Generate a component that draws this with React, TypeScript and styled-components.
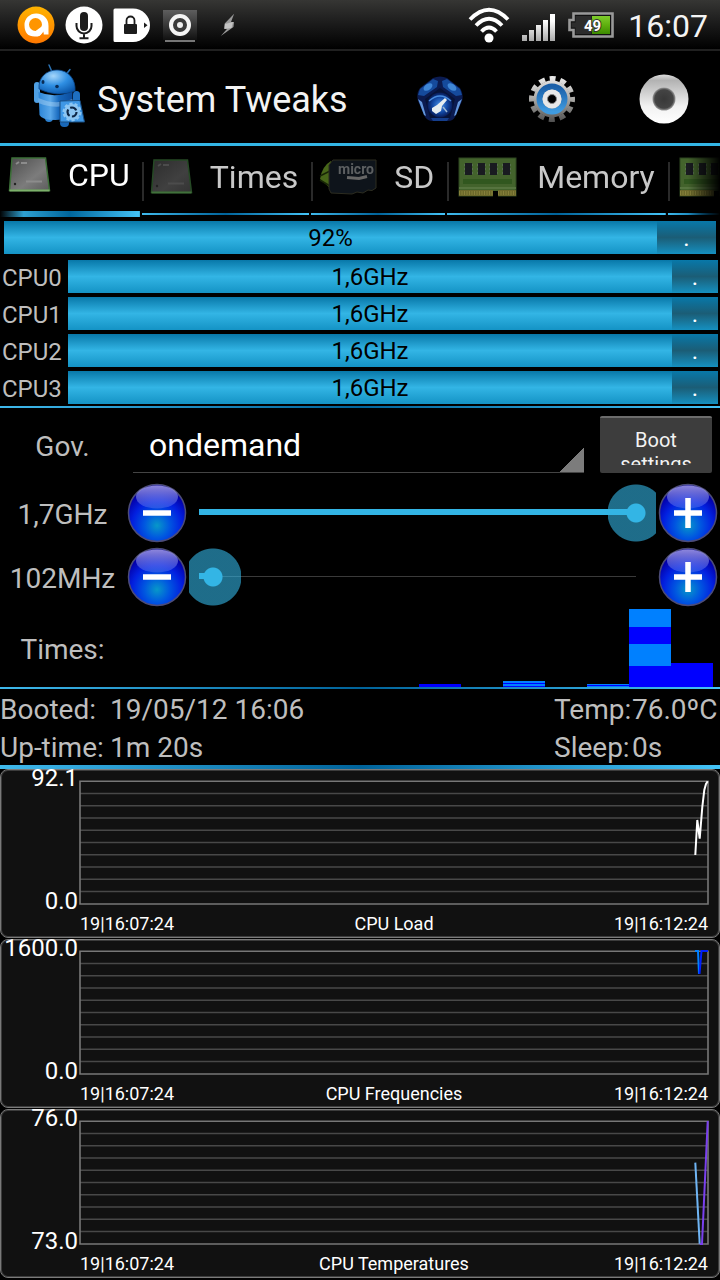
import React, { useState } from "react";
import styled, { createGlobalStyle } from "styled-components";

const GlobalStyle = createGlobalStyle`
  * { box-sizing: border-box; }
  html, body { margin: 0; background: #000; }
  body { font-family: Roboto, "Liberation Sans", sans-serif; color: #bebebe; font-size: 28px; }
  button, select, input { font-family: inherit; margin: 0; }
`;

const Screen = styled.div`
  display: flex;
  flex-direction: column;
  min-height: 100vh;
  background: #000;
  overflow: hidden;
`;

/* ---------- status bar ---------- */

const StatusBar = styled.header`
  display: flex;
  align-items: center;
  justify-content: space-between;
  height: 51px;
  padding: 0 12px 0 17px;
  border-bottom: 2px solid #202020;
  background: linear-gradient(#363634, #1a1a1a 50%, #000);
`;

const StatusGroup = styled.div<{ $gap: number }>`
  display: flex;
  align-items: center;
  gap: ${(p) => p.$gap}px;
`;

const Clock = styled.time`
  margin-left: 2px;
  padding-top: 3px;
  font-size: 32px;
  line-height: 46px;
  color: #f4f4f4;
`;

/* ---------- title bar ---------- */

const TitleBar = styled.div`
  display: flex;
  align-items: center;
  height: 95px;
  padding-left: 32px;
  border-bottom: 3px solid #33b5e5;
`;

const Title = styled.h1`
  flex: 1;
  margin: 0 0 0 11px;
  padding-top: 6px;
  font-size: 36px;
  line-height: 48px;
  font-weight: 400;
  color: #f3f3f3;
`;

const ActionButton = styled.button`
  display: flex;
  align-items: center;
  justify-content: center;
  width: 112px;
  height: 92px;
  padding: 3px 0 0;
  border: 0;
  background: none;
`;

/* ---------- tabs ---------- */

const stripe = "linear-gradient(90deg, #3fb9ec, #00639a 50%, #44c4f8)";

const Tabs = styled.nav`
  display: flex;
  align-items: flex-start;
  gap: 2px;
  height: 71px;
  overflow: hidden;
  mask-image: linear-gradient(90deg, #000 calc(100% - 32px), transparent);
`;

const Tab = styled.button<{ $active?: boolean; $wide?: boolean }>`
  display: flex;
  align-items: center;
  flex: none;
  gap: ${(p) => (p.$wide ? 19 : 17)}px;
  height: ${(p) => (p.$active ? 71 : 69)}px;
  padding: ${(p) => (p.$active ? "0 10px 14px" : "0 11px 8px")};
  padding-left: ${(p) => (p.$wide ? 11 : 8)}px;
  border: 0;
  background: ${(p) =>
    p.$active
      ? "linear-gradient(90deg, #000, #2e9fd0 17%, #00659b 50%, #44c4f8) bottom / 100% 6px no-repeat"
      : `${stripe} bottom / 100% 2px no-repeat, linear-gradient(#2a2a2a, #2a2a2a) 0 16px / 2px 39px no-repeat`};
  font-size: 32px;
  line-height: 40px;
  color: ${(p) => (p.$active ? "#fff" : "#c8c8c8")};
  white-space: nowrap;
`;

/* ---------- load bars ---------- */

const Loads = styled.section`
  display: flex;
  flex-direction: column;
  gap: 4px;
  padding: 4px 2px 2px 2px;
`;

const TotalRow = styled.div`
  display: flex;
  padding: 0 2px 2px;
`;

const CoreRow = styled.div`
  display: grid;
  grid-template-columns: 66px 1fr;
`;

const CoreName = styled.span`
  padding-top: 4px;
  font-size: 24px;
  line-height: 29px;
`;

const Bar = styled.div<{ $rest: number }>`
  display: grid;
  grid-template-columns: 1fr ${(p) => p.$rest}px;
  grid-template-rows: 33px;
  flex: 1;
  font-size: 24px;
  line-height: 31px;
  text-align: center;
`;

const BarFill = styled.span`
  padding-top: 2px;
  height: 33px;
  background: linear-gradient(#0878a9, #33b5e5 50%, #1493c5);
  color: #000;
`;

const BarRest = styled(BarFill)`
  background: linear-gradient(#0878a9, #1b5d76 50%, #1590c0);
  color: #fff;
`;

const Rule = styled.div<{ $height: number }>`
  height: ${(p) => p.$height}px;
  background: ${stripe};
`;

/* ---------- governor and limits ---------- */

const GovernorRow = styled.div`
  display: grid;
  grid-template-columns: 125px 1fr 112px;
  padding: 8px 8px 8px 0;
  height: 73px;
`;

const RowLabel = styled.label`
  align-self: center;
  text-align: center;
  line-height: 36px;
  padding-top: 4px;
`;

const Spinner = styled.select`
  appearance: none;
  margin: 0 16px 0 8px;
  height: 57px;
  padding: 2px 32px 0 16px;
  border: 0;
  border-bottom: 1px solid #444;
  border-radius: 0;
  background: linear-gradient(135deg, transparent 50%, #7c7c7c 50%) right bottom / 24px 24px no-repeat #000;
  color: #fff;
  font-size: 32px;
`;

const BootButton = styled.button`
  height: 57px;
  padding: 10px 8px 8px;
  border: 0;
  border-top: 2px solid #6c6c6c;
  border-radius: 2px;
  background: #3d3d3d;
  color: #f3f3f3;
  font-size: 20px;
  line-height: 24px;
`;

const BootText = styled.span`
  display: block;
  height: 37px;
  overflow: hidden;
`;

const LimitRow = styled.div`
  display: grid;
  grid-template-columns: 125px 64px 1fr 64px;
  align-items: center;
  height: 64px;
`;

const RoundButton = styled.button`
  display: flex;
  align-items: center;
  justify-content: center;
  height: 64px;
  padding: 0;
  border: 0;
  background: none;
`;

const SliderClip = styled.div`
  height: 64px;
  overflow: hidden;
`;

const Slider = styled.input`
  appearance: none;
  display: block;
  width: calc(100% + 26px);
  height: 64px;
  margin-left: -18px;
  background:
    linear-gradient(#33b5e5, #33b5e5) 28px 28px / calc((100% - 56px) * var(--level)) 6px no-repeat,
    linear-gradient(#3a3a3a, #3a3a3a) 28px 31px / calc(100% - 56px) 1px no-repeat;
  &::-webkit-slider-runnable-track { height: 64px; }
  &::-webkit-slider-thumb {
    appearance: none;
    width: 56px;
    height: 64px;
    border: 0;
    background: radial-gradient(circle at 50% 50%, #33b5e5 9px, rgba(51, 181, 229, 0.6) 10px, rgba(51, 181, 229, 0.6) 28px, transparent 29px);
  }
`;

const TimesRow = styled.div`
  display: grid;
  grid-template-columns: 125px 1fr;
  height: 78px;
  padding-right: 7px;
`;

const Histogram = styled.div`
  display: grid;
  grid-template-columns: repeat(14, 1fr);
  align-items: end;
`;

const Stack = styled.div`
  display: flex;
  flex-direction: column;
`;

const Segment = styled.span<{ $size: number; $light: boolean }>`
  height: ${(p) => p.$size}px;
  background: ${(p) => (p.$light ? "#0080ff" : "#0000ff")};
`;

/* ---------- info ---------- */

const Info = styled.dl`
  display: grid;
  grid-template-columns: 110px 1fr 78px 88px;
  margin: 0;
  line-height: 38px;
  padding-top: 2px;
  height: 76px;
  white-space: nowrap;
`;

const Cell = styled.div`
  display: contents;
  dt, dd { margin: 0; }
`;

/* ---------- charts ---------- */

const Charts = styled.section`
  display: flex;
  flex-direction: column;
  gap: 1px;
`;

const ChartCard = styled.figure`
  display: grid;
  grid-template-columns: 78px 1fr;
  grid-template-rows: 140px 27px;
  margin: 0;
  padding-right: 10px;
  border: 1px solid #7a7a7a;
  border-radius: 8px;
  background: #111;
  box-shadow: inset 0 0 0 1px #3c3c3c;
  color: #fff;
`;

const Axis = styled.div`
  display: flex;
  flex-direction: column;
  justify-content: space-between;
  align-items: flex-end;
  padding: 0 1px 1px 0;
  font-size: 24px;
  line-height: 16px;
`;

const Plot = styled.svg`
  display: block;
  width: 100%;
  height: 125px;
  margin-top: 10px;
`;

const ChartFooter = styled.figcaption`
  grid-column: 2;
  display: flex;
  justify-content: space-between;
  padding: 0 1px;
  font-size: 18px;
  line-height: 27px;
`;

/* ---------- icons ---------- */

const AvastIcon = () => (
  <svg width="38" height="38" viewBox="0 0 38 38" aria-hidden="true">
    <defs>
      <linearGradient id="orange" x1="0" y1="0" x2="0" y2="1">
        <stop offset="0" stopColor="#ffb400" />
        <stop offset="1" stopColor="#ff7800" />
      </linearGradient>
    </defs>
    <circle cx="19" cy="19" r="18.5" fill="url(#orange)" />
    <path d="M19 7.5A12 12 0 0 1 31.5 20v8.500h-5V27l-4 3q-15 3-15-11A11.500 11.500 0 0 1 19 7.500z" fill="#fff" />
    <circle cx="18.500" cy="18.500" r="6.500" fill="#ff9500" />
    <path d="M18 25.500l8-6v6l-6 5z" fill="#fff" />
    <path d="M22 31.500l4.500-6v6z" fill="#ff8300" />
  </svg>
);

const MicIcon = () => (
  <svg width="38" height="38" viewBox="0 0 38 38" aria-hidden="true">
    <circle cx="19" cy="19" r="18.5" fill="#fff" />
    <rect x="15" y="6" width="8" height="19" rx="4" fill="#1c1c1c" />
    <path d="M11.5 17v3a7.5 7.5 0 0 0 15 0v-3M19 28v4M14.5 32.2h9" fill="none" stroke="#1c1c1c" strokeWidth="2" />
  </svg>
);

const LockTagIcon = () => (
  <svg width="38" height="38" viewBox="0 0 38 38" aria-hidden="true">
    <path d="M2 2.5h18a17 16.7 0 0 1 0 33.4H2a1.5 1.5 0 0 1-1.5-1.5V4A1.5 1.5 0 0 1 2 2.5z" fill="#fff" />
    <rect x="11" y="18" width="13" height="10" rx="1" fill="#1c1c1c" />
    <path d="M13.5 18v-3.5a4 4 0 0 1 8 0V18" fill="none" stroke="#1c1c1c" strokeWidth="1.8" />
    <path d="M31 16.5l3.500 2.700-3.500 2.700z" fill="#1c1c1c" />
  </svg>
);

const SpeakerIcon = () => (
  <svg width="38" height="38" viewBox="0 0 38 38" aria-hidden="true">
    <defs>
      <linearGradient id="speaker" x1="0" y1="0" x2="0" y2="1">
        <stop offset="0" stopColor="#5e5e5e" />
        <stop offset="1" stopColor="#111" />
      </linearGradient>
    </defs>
    <rect x="2" y="4" width="34" height="30" fill="url(#speaker)" />
    <rect x="4" y="34" width="30" height="2" fill="#777" />
    <circle cx="19" cy="19" r="9" fill="#3a3a3a" stroke="#f4f4f4" strokeWidth="4" />
    <circle cx="19" cy="19" r="3" fill="#eee" />
  </svg>
);

const BoltIcon = () => (
  <svg width="38" height="38" viewBox="0 0 38 38" aria-hidden="true">
    <path d="M27 9L16 17l-1.500 5 3 .500L10 28.500l0 0L24 22l1.500-5-3-.500z" fill="#999" transform="rotate(-10 19 19)" />
    <path d="M16 18l8-2-1.500 6-7 1z" fill="#c4c4c4" />
  </svg>
);

const WifiIcon = () => (
  <svg width="42" height="36" viewBox="0 0 42 36" aria-hidden="true">
    <g fill="none" stroke="#fff" strokeWidth="3.8">
      <path d="M2 12.500Q21-7 40 12.500" />
      <path d="M8 18.500Q21 5 34 18.500" />
      <path d="M13.5 24.500Q21 16.500 28.5 24.500" />
    </g>
    <circle cx="21" cy="31" r="4.5" fill="#fff" />
  </svg>
);

const SignalIcon = () => (
  <svg width="34" height="32" viewBox="0 0 34 32" aria-hidden="true">
    <defs>
      <linearGradient id="signal" gradientUnits="userSpaceOnUse" x1="0" y1="12" x2="0" y2="32">
        <stop offset="0" stopColor="#fff" />
        <stop offset="1" stopColor="#aaa" />
      </linearGradient>
    </defs>
    {[6, 11, 16, 21, 27].map((h, i) => (
      <rect key={h} x={i * 7} y={32 - h} width="5" height={h} fill="url(#signal)" />
    ))}
  </svg>
);

const BatteryIcon = () => (
  <svg width="46" height="26" viewBox="0 0 46 26" aria-hidden="true">
    <defs>
      <linearGradient id="charge" x1="0" y1="0" x2="0" y2="1">
        <stop offset="0" stopColor="#7ecb2c" />
        <stop offset=".5" stopColor="#5fb00e" />
        <stop offset="1" stopColor="#3c8a00" />
      </linearGradient>
    </defs>
    <path d="M5.5 1.5h39v23h-39V18h-4V8h4z" fill="#111" stroke="#999" strokeWidth="2.6" />
    <path d="M3.5 10.5h4V4h16v18H7.5v-6.5h-4z" fill="#2c2c2c" />
    <rect x="24" y="4" width="18" height="18" fill="url(#charge)" />
    <text x="24.5" y="18.500" textAnchor="middle" fontSize="15" fontWeight="700" fill="#fff" stroke="#333" strokeWidth="2" paintOrder="stroke">49</text>
  </svg>
);

const RobotIcon = () => (
  <svg width="54" height="66" viewBox="0 0 54 66" aria-hidden="true">
    <defs>
      <linearGradient id="robot" x1="0" y1="0" x2="1" y2="0">
        <stop offset="0" stopColor="#2b84d6" />
        <stop offset=".35" stopColor="#5aa8ea" />
        <stop offset=".6" stopColor="#1768bd" />
        <stop offset="1" stopColor="#0c4c9c" />
      </linearGradient>
      <radialGradient id="head" cx=".4" cy=".25" r=".8">
        <stop offset="0" stopColor="#a5d6fa" />
        <stop offset=".5" stopColor="#2f8fe3" />
        <stop offset="1" stopColor="#0a55a8" />
      </radialGradient>
    </defs>
    <path d="M17 1l3.5 8M38 5.5l-4 5" stroke="#2c73b4" strokeWidth="1.5" strokeLinecap="round" />
    <rect x="2" y="18" width="6" height="21" rx="3" fill="#4fa0e4" />
    <rect x="41" y="27" width="7" height="16" rx="3.5" fill="#1e6fc1" />
    <rect x="13" y="48" width="8" height="10" rx="4" fill="#2b80cf" />
    <rect x="28" y="50" width="9" height="13" rx="4" fill="#1968b8" />
    <path d="M6.5 28q17 7 34-1v22q-3 7-17 7t-16-5z" fill="url(#robot)" />
    <path d="M6.5 34q17 8 34 1v5q-17 6-34-1z" fill="#b8dcf7" opacity=".4" />
    <path d="M7 25C6 14 14 6 25 6s19 9 18 21q-17 7-36-2z" fill="url(#head)" stroke="#0b4484" strokeWidth=".8" />
    <ellipse cx="11" cy="18" rx="1.5" ry="2" fill="#0a2c55" />
    <ellipse cx="25" cy="22.5" rx="1.8" ry="1.8" fill="#0a2c55" />
    <path d="M28 37l20-.5 4.500 21.500H28z" fill="#3f98e6" stroke="#184c80" />
    <circle cx="40" cy="48" r="8" fill="#8cc6f3" stroke="#8cc6f3" strokeWidth="3" strokeDasharray="3 2" />
    <circle cx="40" cy="48" r="4.500" fill="none" stroke="#0d2747" strokeWidth="2.2" strokeDasharray="7 2.400" />
  </svg>
);

const PentagonIcon = () => (
  <svg width="48" height="46" viewBox="0 0 48 46" aria-hidden="true">
    <defs>
      <radialGradient id="gem">
        <stop offset="0" stopColor="#4a92e8" />
        <stop offset=".6" stopColor="#1248a4" />
        <stop offset="1" stopColor="#081c58" />
      </radialGradient>
    </defs>
    <path d="M17 2Q24-1 31 2l13 10q4 6 2 13l-7 16q-2 4-7 4H16q-4 0-7-4L2 25q-2-8 2-13z" fill="#0b1b50" />
    <path d="M4 13L17 3l5 2-1 6-13 9-6-1zM31 3l13 10 2 6-6 1-13-9-1-6z" fill="#154a9c" />
    <ellipse cx="12" cy="11" rx="5" ry="3" fill="#3f86d6" transform="rotate(-36 12 11)" />
    <ellipse cx="36" cy="11" rx="5" ry="3" fill="#3f86d6" transform="rotate(36 36 11)" />
    <path d="M2 23l4 3 4 14-2-1zM46 23l-4 3-4 14 2-1z" fill="#6397dc" />
    <path d="M15 42q9-3 18 0l-2 3H17z" fill="#153e8c" />
    <path d="M24 12l15 11-5 19H14L9 23z" fill="#071338" />
    <circle cx="24" cy="29" r="12.5" fill="url(#gem)" />
    <path d="M13 25q11-10 22 0" fill="none" stroke="#478bdf" strokeWidth="1.5" />
    <path d="M16 32l5-3 8-7 2 2-5 6-1 5-5 3-4-3z" fill="#e6edf0" />
    <path d="M27 31l4 5" stroke="#9cb8d4" strokeWidth="1.5" />
  </svg>
);

const GearIcon = () => (
  <svg width="48" height="48" viewBox="0 0 48 48" aria-hidden="true">
    <defs>
      <linearGradient id="steel" gradientUnits="userSpaceOnUse" x1="0" y1="0" x2="0" y2="48">
        <stop offset="0" stopColor="#f0f0f0" />
        <stop offset=".5" stopColor="#aaa9a6" />
        <stop offset="1" stopColor="#4c4c4c" />
      </linearGradient>
      <linearGradient id="ring" x1="0" y1="0" x2="0" y2="1">
        <stop offset="0" stopColor="#1a5fa8" />
        <stop offset="1" stopColor="#3f9be0" />
      </linearGradient>
    </defs>
    <circle cx="24" cy="24" r="18.5" fill="url(#steel)" />
    <circle cx="24" cy="24" r="20.500" fill="none" stroke="url(#steel)" strokeWidth="5" strokeDasharray="6 4.733" strokeDashoffset="3" transform="rotate(0 24 24)" />
    <circle cx="24" cy="24" r="12.5" fill="none" stroke="url(#ring)" strokeWidth="6" />
    <circle cx="24" cy="24" r="9.500" fill="#e8e8e8" />
    <circle cx="24" cy="24" r="4.5" fill="#000" stroke="#888" strokeWidth="1" />
  </svg>
);

const RecordIcon = () => (
  <svg width="50" height="50" viewBox="0 0 50 50" aria-hidden="true">
    <defs>
      <linearGradient id="pearl" x1="0" y1="0" x2="0" y2="1">
        <stop offset="0" stopColor="#ddd" />
        <stop offset=".12" stopColor="#b2b2b2" />
        <stop offset=".65" stopColor="#f2f2f2" />
        <stop offset="1" stopColor="#fff" />
      </linearGradient>
      <radialGradient id="hole">
        <stop offset="0" stopColor="#383838" />
        <stop offset=".8" stopColor="#444" />
        <stop offset="1" stopColor="#999" />
      </radialGradient>
    </defs>
    <circle cx="25" cy="25" r="24.5" fill="url(#pearl)" />
    <circle cx="25" cy="25" r="11.5" fill="url(#hole)" />
  </svg>
);

const ChipIcon = ({ dim }: { dim?: boolean }) => {
  const id = dim ? "chip-dim" : "chip";
  return (
    <svg width="43" height="36" viewBox="0 0 43 36" aria-hidden="true">
      <defs>
        <linearGradient id={id} x1="0" y1="0" x2="1" y2="1">
          <stop offset="0" stopColor={dim ? "#2c2c2c" : "#4c4c4c"} />
          <stop offset=".6" stopColor={dim ? "#404040" : "#7c7c7c"} />
          <stop offset="1" stopColor={dim ? "#333" : "#5c5c5c"} />
        </linearGradient>
      </defs>
      <path d="M4 1h33.500l4 32.500H1.500z" fill={`url(#${id})`} stroke={dim ? "#264a25" : "#3c7038"} strokeWidth="1.5" />
      <path d="M1.5 33.500h40" stroke={dim ? "#41703b" : "#7cb06a"} strokeWidth="2" />
      <path d="M8 7l3-2M13 6h6M18 24.500h16" stroke={dim ? "#4c4c4c" : "#8c8c8c"} strokeWidth="2" />
      <circle cx="7" cy="27" r="1.200" fill="#222" />
    </svg>
  );
};

const SdIcon = () => (
  <svg width="58" height="36" viewBox="0 0 58 36" aria-hidden="true">
    <path d="M12 2Q3 7 1 20l11 10z" fill="#476619" />
    <path d="M1 17l10-5M1 21l10 6" stroke="#182606" strokeWidth="1.5" />
    <path d="M14 1h43v28q-4 4-8 2l-5 3-6-1-5 2-21-1-2-4V6z" fill="#0e141b" stroke="#2c2c20" />
    <text x="19" y="15" fontSize="14" fontWeight="700" fill="#5c5f61">micro</text>
    <path d="M28 18.500l12 1 8-2" fill="none" stroke="#666" strokeWidth="3" />
  </svg>
);

const MemoryIcon = () => (
  <svg width="60" height="40" viewBox="0 0 60 40" aria-hidden="true">
    <rect x="1" y="1" width="57" height="38" fill="#43632c" stroke="#2f4621" />
    {[7, 20, 32, 45].map((x) => (
      <path key={x} d={`M${x - 1} 8h9M${x - 1} 12h9M${x - 1} 16h9`} stroke="#5f7458" strokeWidth="1.5" />
    ))}
    {[7, 20, 32, 45].map((x) => (
      <rect key={x} x={x} y="6" width="7" height="12" fill="#191b20" />
    ))}
    <rect x="5" y="22" width="49" height="5" fill="#31571f" />
    <path d="M1 31h57" stroke="#56743f" strokeWidth="2" />
    <path d="M1 36h34M40 36h18" stroke="#6b682b" strokeWidth="6" />
    <path d="M1 36h34M40 36h18" stroke="#86803b" strokeWidth="4" strokeDasharray="1 1.5" />
    <rect x="35" y="34" width="5" height="6" fill="#000" />
  </svg>
);

const BallIcon = ({ plus }: { plus?: boolean }) => {
  const id = plus ? "ball-plus" : "ball-minus";
  return (
    <svg width="60" height="60" viewBox="0 0 60 60" aria-hidden="true">
      <defs>
        <radialGradient id={id} cx=".5" cy=".72" r=".62">
          <stop offset="0" stopColor="#0798c8" />
          <stop offset=".35" stopColor="#0058e0" />
          <stop offset=".7" stopColor="#0220e0" />
          <stop offset="1" stopColor="#0300a8" />
        </radialGradient>
        <linearGradient id={`${id}-gloss`} x1="0" y1="0" x2="0" y2="1">
          <stop offset="0" stopColor="#b0a8e8" stopOpacity=".8" />
          <stop offset="1" stopColor="#6a80f0" stopOpacity=".35" />
        </linearGradient>
      </defs>
      <circle cx="30" cy="30" r="28.5" fill={`url(#${id})`} stroke="#4c4c78" strokeWidth="1.5" />
      <ellipse cx="30" cy="14" rx="21" ry="11.5" fill={`url(#${id}-gloss)`} />
      <path d={plus ? "M16 30h28M30 15v30" : "M16 30h28"} stroke="#fff" strokeWidth="5.5" />
    </svg>
  );
};

/* ---------- data ---------- */

const cores = ["CPU0", "CPU1", "CPU2", "CPU3"];

/* Segment heights per frequency step, top to bottom, in alternating shades. */
const residency: { sizes: number[]; endsLight?: boolean }[] = [
  ...Array.from({ length: 7 }, () => ({ sizes: [] as number[] })),
  { sizes: [3] },
  { sizes: [] },
  { sizes: [2, 1, 2, 1] },
  { sizes: [] },
  { sizes: [1, 1, 1], endsLight: true },
  { sizes: [18, 17, 22, 21] },
  { sizes: [24] },
];

const charts = [
  {
    name: "CPU Load",
    max: "92.1",
    min: "0.0",
    lines: [{ color: "#fff", points: "616.3,75 618.3,40 620.7,58.7 623.3,27 625.3,10 627,4 628.7,1.3" }],
  },
  {
    name: "CPU Frequencies",
    max: "1600.0",
    min: "0.0",
    lines: [
      { color: "#0080ff", points: "616,1 619,1 620,24" },
      { color: "#0020ff", points: "620.5,24 622.5,1 629,1" },
    ],
  },
  {
    name: "CPU Temperatures",
    max: "76.0",
    min: "73.0",
    lines: [
      { color: "#6fb5f5", points: "616.3,42.6 620.7,124" },
      { color: "#7a40ee", points: "620.7,124 623,124 628.7,1" },
    ],
  },
];

/* ---------- parts ---------- */

type LimitProps = { id: string; text: string; initial: number };

const MIN_MHZ = 51;
const MAX_MHZ = 1700;

function Limit({ id, text, initial }: LimitProps) {
  const [value, setValue] = useState(initial);
  const step = (delta: number) => setValue((v) => Math.min(MAX_MHZ, Math.max(MIN_MHZ, v + delta)));
  const level = (value - MIN_MHZ) / (MAX_MHZ - MIN_MHZ);
  return (
    <LimitRow>
      <RowLabel htmlFor={id}>{text}</RowLabel>
      <RoundButton type="button" aria-label="Decrease" onClick={() => step(-100)}>
        <BallIcon />
      </RoundButton>
      <SliderClip>
        <Slider
          id={id}
          type="range"
          min={MIN_MHZ}
          max={MAX_MHZ}
          value={value}
          onChange={(e) => setValue(Number(e.target.value))}
          style={{ "--level": level } as React.CSSProperties}
        />
      </SliderClip>
      <RoundButton type="button" aria-label="Increase" onClick={() => step(100)}>
        <BallIcon plus />
      </RoundButton>
    </LimitRow>
  );
}

function Chart({ name, max, min, lines }: (typeof charts)[number]) {
  return (
    <ChartCard>
      <Axis>
        <span>{max}</span>
        <span>{min}</span>
      </Axis>
      <Plot viewBox="0 0 630 125" preserveAspectRatio="none" role="img" aria-label={name}>
        {Array.from({ length: 9 }, (_, i) => (
          <path key={i} d={`M1 ${13.5 + i * 12.25}H629`} stroke="#484848" strokeWidth="1.3" />
        ))}
        <path d="M1 1.3H629V124H1z" fill="none" stroke="#777" strokeWidth="1.6" />
        {lines.map((line) => (
          <polyline key={line.color} points={line.points} fill="none" stroke={line.color} strokeWidth="2" />
        ))}
      </Plot>
      <ChartFooter>
        <span>19|16:07:24</span>
        <span>{name}</span>
        <span>19|16:12:24</span>
      </ChartFooter>
    </ChartCard>
  );
}

export default function App() {
  return (
    <Screen>
      <GlobalStyle />
      <StatusBar>
        <StatusGroup $gap={10}>
          <AvastIcon />
          <MicIcon />
          <LockTagIcon />
          <SpeakerIcon />
          <BoltIcon />
        </StatusGroup>
        <StatusGroup $gap={12}>
          <WifiIcon />
          <SignalIcon />
          <BatteryIcon />
          <Clock>16:07</Clock>
        </StatusGroup>
      </StatusBar>

      <TitleBar>
        <RobotIcon />
        <Title>System Tweaks</Title>
        <ActionButton type="button" aria-label="Tools"><PentagonIcon /></ActionButton>
        <ActionButton type="button" aria-label="Settings"><GearIcon /></ActionButton>
        <ActionButton type="button" aria-label="Record"><RecordIcon /></ActionButton>
      </TitleBar>

      <Tabs>
        <Tab type="button" $active><ChipIcon />CPU</Tab>
        <Tab type="button"><ChipIcon dim />Times</Tab>
        <Tab type="button"><SdIcon />SD</Tab>
        <Tab type="button" $wide><MemoryIcon />Memory</Tab>
        <Tab type="button" $wide aria-label="More"><MemoryIcon /></Tab>
      </Tabs>

      <Loads>
        <TotalRow>
          <Bar $rest={59}>
            <BarFill>92%</BarFill>
            <BarRest>.</BarRest>
          </Bar>
        </TotalRow>
        {cores.map((core) => (
          <CoreRow key={core}>
            <CoreName>{core}</CoreName>
            <Bar $rest={46}>
              <BarFill>1,6GHz</BarFill>
              <BarRest>.</BarRest>
            </Bar>
          </CoreRow>
        ))}
      </Loads>
      <Rule $height={2} />

      <GovernorRow>
        <RowLabel htmlFor="governor">Gov.</RowLabel>
        <Spinner id="governor" defaultValue="ondemand">
          <option>ondemand</option>
          <option>performance</option>
        </Spinner>
        <BootButton type="button"><BootText>Boot settings</BootText></BootButton>
      </GovernorRow>
      <Limit id="max-frequency" text="1,7GHz" initial={1700} />
      <Limit id="min-frequency" text="102MHz" initial={102} />
      <TimesRow>
        <RowLabel as="span">Times:</RowLabel>
        <Histogram>
          {residency.map(({ sizes, endsLight }, column) => (
            <Stack key={column}>
              {sizes.map((size, i) => (
                <Segment key={i} $size={size} $light={(sizes.length - 1 - i) % 2 === (endsLight ? 0 : 1)} />
              ))}
            </Stack>
          ))}
        </Histogram>
      </TimesRow>
      <Rule $height={2} />

      <Info>
        <Cell><dt>Booted:</dt><dd>19/05/12 16:06</dd></Cell>
        <Cell><dt>Temp:</dt><dd>76.0ºC</dd></Cell>
        <Cell><dt>Up-time:</dt><dd>1m 20s</dd></Cell>
        <Cell><dt>Sleep:</dt><dd>0s</dd></Cell>
      </Info>
      <Rule $height={4} />

      <Charts>
        {charts.map((chart) => (
          <Chart key={chart.name} {...chart} />
        ))}
      </Charts>
    </Screen>
  );
}
